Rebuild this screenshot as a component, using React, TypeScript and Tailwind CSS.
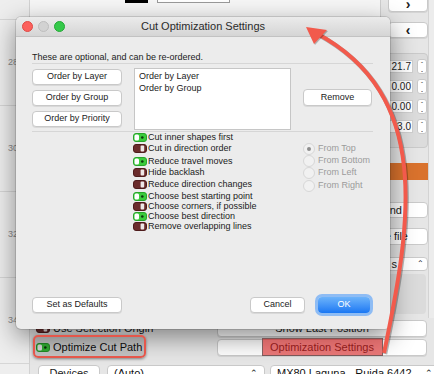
import React from "react";

const Toggle = ({ on }: { on: boolean }) =>
  on ? (
    <svg width="14" height="9" viewBox="0 0 14 9" className="shrink-0">
      <rect x="0.5" y="0.5" width="13" height="8" rx="2.5" fill="#3bcb3c" stroke="#28a52a" />
      <rect x="1.5" y="1.5" width="4.5" height="6" rx="1.5" fill="#fff" />
      <circle cx="9.3" cy="4.5" r="1.3" fill="#0c3a0c" />
    </svg>
  ) : (
    <svg width="14" height="9" viewBox="0 0 14 9" className="shrink-0">
      <rect x="0.5" y="0.5" width="13" height="8" rx="2.5" fill="#6b2c2c" stroke="#4e1c1c" />
      <rect x="7.6" y="1.5" width="3.6" height="6" rx="1" fill="#efe8e8" />
    </svg>
  );

const MacButton = ({ label, className }: { label: string; className: string }) => (
  <div
    className={
      "flex items-center justify-center shrink-0 bg-white border border-[#c9c9c9] rounded-[4px] shadow-[0_1px_0_rgba(0,0,0,0.08)] text-[9px] text-[#1b1b1b] whitespace-nowrap " +
      className
    }
  >
    {label}
  </div>
);

const options = [
  { label: "Cut inner shapes first", on: true, cls: "mt-0" },
  { label: "Cut in direction order", on: false, cls: "mt-[1px]" },
  { label: "Reduce travel moves", on: true, cls: "mt-[3px]" },
  { label: "Hide backlash", on: false, cls: "mt-[1px]" },
  { label: "Reduce direction changes", on: false, cls: "mt-[2px]" },
  { label: "Choose best starting point", on: true, cls: "mt-[2px]" },
  { label: "Choose corners, if possible", on: false, cls: "mt-0" },
  { label: "Choose best direction", on: true, cls: "mt-0" },
  { label: "Remove overlapping lines", on: false, cls: "mt-0" },
];

const radios = [
  { label: "From Top", cls: "" },
  { label: "From Bottom", cls: "" },
  { label: "From Left", cls: "" },
  { label: "From Right", cls: "mt-[1px]" },
];

const Ruler = () => (
  <div className="w-[30px] h-full shrink-0 bg-[#eeeeee] border-r border-[#d2d2d2] flex flex-col text-[9px] text-[#8a8a8a]">
    <div className="h-[20px] border-b border-[#d6d6d6]" />
    {["28", "30", "32", "34"].map((n) => (
      <div key={n} className="h-[86px] border-b border-[#d6d6d6] flex items-center pl-[8px]">
        {n}
      </div>
    ))}
  </div>
);

const Spin = ({ value }: { value: string }) => (
  <div className="flex items-center h-[13px]">
    <div className="w-[31px] h-[13px] bg-white border border-[#cfcfcf] text-[10px] leading-[11px] text-right pr-[1px] text-[#222]">
      {value}
    </div>
    <div className="ml-[4px] w-[10px] h-[15px] bg-white border border-[#c9c9c9] rounded-[3px] flex flex-col items-center justify-center text-[6px] leading-[6px] text-[#333]">
      <span>ˆ</span>
      <span className="rotate-180">ˆ</span>
    </div>
  </div>
);

const RightPanel = () => (
  <div className="w-[54px] shrink-0 flex bg-[#e6e6e6] border-l border-[#cdcdcd]">
    <div className="w-[47px] flex flex-col">
      <MacButton label="›" className="ml-[7px] w-[40px] h-[16px] -mt-[4px] text-[14px] font-bold" />
      <MacButton label="‹" className="ml-[7px] w-[40px] h-[16px] mt-[10px] text-[14px] font-bold" />
      <div className="mt-[15px] h-[95px] bg-[#dcdcdc] border border-[#cacaca] rounded-[4px] flex flex-col gap-[7px] pt-[6px]">
        <Spin value="21.7" />
        <Spin value="0.00" />
        <Spin value="0.00" />
        <Spin value="3.0" />
      </div>
      <div className="mt-[15px] h-[17px] w-[50px] bg-[#d9722d]" />
      <div className="mt-[22px] h-[16px] bg-white border border-[#cacaca] rounded-[4px] flex items-center justify-end pr-[25px] text-[11px] text-[#1b1b1b] whitespace-nowrap overflow-hidden">
        <span className="shrink-0">Send</span>
      </div>
      <div className="mt-[10px] h-[17px] bg-white border border-[#cacaca] rounded-[4px] flex items-center justify-end pr-[19px] text-[11px] text-[#1b1b1b] whitespace-nowrap overflow-hidden">
        <span className="shrink-0">Save file</span>
      </div>
      <div className="mt-[12px] h-[14px] bg-white border border-[#cacaca] rounded-[4px] flex items-center justify-end pr-[3px] text-[11px] text-[#1b1b1b]">
        <span className="mr-[20px]">s</span>
        <span className="text-[8px]">⌃</span>
      </div>
      <div className="mt-[3px] h-[40px] mr-[2px] bg-[#dbdbdb] rounded-[4px]" />
    </div>
    <div className="flex-1 border-l border-[#d3d3d3] bg-[#ececec]" />
  </div>
);

const BottomControls = () => (
  <div className="flex-1 min-w-0 bg-[#e6e6e6] flex flex-col text-[11px] text-[#111] overflow-hidden">
    <div className="mt-[2px] flex h-[17px]">
      <div className="w-[187px] shrink-0 flex items-center pl-[6px] gap-[3px] whitespace-nowrap">
        <Toggle on={false} />
        <span>Use Selection Origin</span>
      </div>
      <MacButton label="Show Last Position" className="w-[210px] h-[17px] text-[11px]" />
    </div>
    <div className="mt-[2px] flex h-[17px]">
      <div className="w-[187px] shrink-0 flex items-center pl-[6px] gap-[3px] whitespace-nowrap">
        <Toggle on={true} />
        <span className="text-[11px]">Optimize Cut Path</span>
      </div>
      <MacButton label="Optimization Settings" className="w-[210px] h-[17px] text-[11px]" />
    </div>
    <div className="mt-[9px] flex h-[17px] whitespace-nowrap">
      <MacButton label="Devices" className="ml-[8px] w-[62px] h-[17px] text-[11px]" />
      <div className="ml-[7px] w-[158px] shrink-0 h-[17px] bg-white border border-[#c9c9c9] rounded-[4px] flex items-center px-[6px]">
        <span>(Auto)</span>
        <span className="ml-auto text-[9px]">⌃</span>
      </div>
      <div className="ml-[5px] w-[170px] shrink-0 h-[17px] bg-white border border-[#c9c9c9] rounded-[4px] flex items-center px-[6px] overflow-hidden">
        <span>MX80 Laguna - Ruida 6442</span>
        <span className="ml-auto text-[9px]">⌃</span>
      </div>
    </div>
  </div>
);

const Background = () => (
  <div className="flex h-full w-[434px]">
    <Ruler />
    <div className="flex flex-col w-[404px] min-w-0 overflow-hidden">
      <div className="flex h-[318px] shrink-0">
        <div className="relative w-[350px] shrink-0 bg-[#f6f6f6]">
          <div className="absolute left-[95px] top-0 w-[23px] h-[3px] bg-black" />
          <div className="absolute left-[127px] -top-[2px] w-[73px] h-[5px] border border-[#9a9a9a] bg-white" />
        </div>
        <RightPanel />
      </div>
      <BottomControls />
    </div>
  </div>
);

const Dialog = () => (
  <div className="absolute left-[16px] top-[17px] w-[374px] h-[312px] rounded-[5px] overflow-hidden bg-[#ececec] shadow-[0_8px_26px_rgba(0,0,0,0.45),0_0_0_1px_rgba(0,0,0,0.12)] flex flex-col">
    <div className="h-[20px] shrink-0 grid grid-cols-[1fr_auto_1fr] items-center bg-gradient-to-b from-[#ebebeb] to-[#d5d5d5] border-b border-[#c2c2c2]">
      <div className="flex items-center gap-[5px] pl-[6px]">
        <div className="w-[11px] h-[11px] rounded-full bg-[#fc605c] border border-[#de4a45]" />
        <div className="w-[11px] h-[11px] rounded-full bg-[#d2d2d2] border border-[#bdbdbd]" />
        <div className="w-[11px] h-[11px] rounded-full bg-[#35c94a] border border-[#23a836]" />
      </div>
      <div className="text-[11px] text-[#2a2a2a]">Cut Optimization Settings</div>
      <div />
    </div>
    <div className="flex-1 flex flex-col pl-[16px] pr-[17px] pb-[16px]">
      <div className="mt-[15px] h-[11px] leading-[11px] text-[9px] text-[#1b1b1b]">
        These are optional, and can be re-ordered.
      </div>
      <div className="h-px bg-[#d6d6d6]" />
      <div className="mt-[4px] flex items-start">
        <div className="mt-[1px] flex flex-col gap-[5px]">
          <MacButton label="Order by Layer" className="w-[90px] h-[16px]" />
          <MacButton label="Order by Group" className="w-[90px] h-[16px]" />
          <MacButton label="Order by Priority" className="w-[90px] h-[16px]" />
        </div>
        <div className="ml-[12px] w-[157px] h-[62px] bg-white border border-[#c6c6c6] pt-[1px] pl-[4px] text-[9px] leading-[12px] text-[#1b1b1b]">
          <div>Order by Layer</div>
          <div>Order by Group</div>
        </div>
        <MacButton label="Remove" className="ml-[12px] mt-[21px] w-[69px] h-[17px]" />
      </div>
      <div className="mt-[1px] h-px bg-[#d6d6d6]" />
      <div className="flex text-[9px] text-[#1b1b1b]">
        <div className="ml-[101px] w-[170px] flex flex-col">
          {options.map((o) => (
            <div key={o.label} className={"flex items-center h-[10px] leading-[10px] " + o.cls}>
              <Toggle on={o.on} />
              <span className="ml-[1px] whitespace-nowrap">{o.label}</span>
            </div>
          ))}
        </div>
        <div className="mt-[11px] flex flex-col">
          {radios.map((r, i) => (
            <div key={r.label} className={"flex items-center h-[12px] " + r.cls}>
              <div className="w-[12px] h-[12px] rounded-full bg-[#f1f1f1] border border-[#d7d7d7] flex items-center justify-center">
                {i === 0 && <div className="w-[4px] h-[4px] rounded-full bg-[#8d8d8d]" />}
              </div>
              <span className="ml-[3px] text-[#9b9b9b] whitespace-nowrap">{r.label}</span>
            </div>
          ))}
        </div>
      </div>
      <div className="flex-1" />
      <div className="flex items-center">
        <MacButton label="Set as Defaults" className="w-[90px] h-[16px]" />
        <MacButton label="Cancel" className="ml-auto w-[55px] h-[16px]" />
        <div className="ml-[13px] mr-[3px] w-[52px] h-[16px] rounded-[4px] bg-gradient-to-b from-[#6cb3fa] to-[#1877f3] ring-[3px] ring-[#8ebcf4] flex items-center justify-center text-[9px] text-white">
          OK
        </div>
      </div>
    </div>
  </div>
);

const Annotations = () => (
  <>
    <div className="absolute left-[33px] top-[335px] w-[113px] h-[23px] rounded-[5px] border-2 border-[#e5574b] bg-black/15 shadow-[0_1px_3px_rgba(0,0,0,0.45)]" />
    <div className="absolute left-[262px] top-[338px] w-[121px] h-[18px] bg-[rgba(215,30,30,0.6)] border border-[#555]/70" />
    <svg className="absolute left-0 top-0 pointer-events-none" width="434" height="374" viewBox="0 0 434 374">
      <path d="M384,353 C412,220 432,95 316,33" fill="none" stroke="rgba(0,0,0,0.28)" strokeWidth="4.5" transform="translate(1,1)" />
      <path d="M384,353 C412,220 432,95 316,33" fill="none" stroke="#f25a4c" strokeWidth="4" />
      <polygon points="306,27 327,30 314,44" fill="rgba(0,0,0,0.25)" transform="translate(1,1)" />
      <polygon points="306,27 327,30 314,44" fill="#f25a4c" />
    </svg>
  </>
);

export default function App() {
  return (
    <div className="relative w-[434px] h-[374px] overflow-hidden bg-[#e6e6e6] font-['Liberation_Sans',Arial,sans-serif]">
      <Background />
      <Dialog />
      <Annotations />
    </div>
  );
}
